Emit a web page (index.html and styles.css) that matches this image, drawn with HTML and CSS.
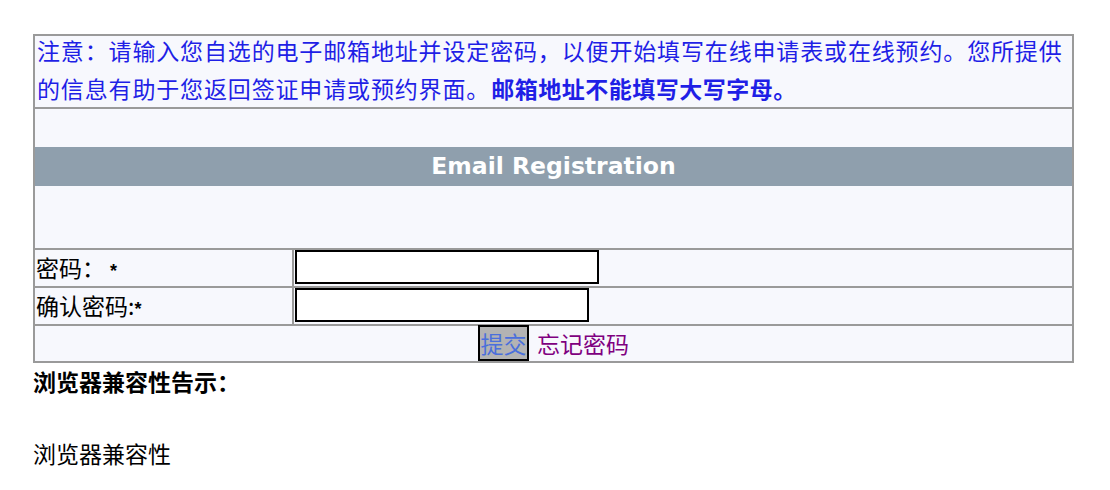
FILE: index.html
```html
<!DOCTYPE html>
<html lang="zh-CN">
<head>
<meta charset="utf-8">
<title>Email Registration</title>
<link rel="stylesheet" href="styles.css">
</head>
<body>
<div class="page">
  <div class="form-box">
    <div class="row notice"><div class="notice-text">注意：请输入您自选的电子邮箱地址并设定密码，以便开始填写在线申请表或在线预约。您所提供的信息有助于您返回签证申请或预约界面。<b>邮箱地址不能填写大写字母。</b></div></div>
    <div class="row spacer-top"></div>
    <div class="row header">Email Registration</div>
    <div class="row spacer-mid"></div>
    <div class="row field">
      <div class="label">密码：<b class="star"> *</b></div>
      <div class="value"><input type="password" class="inp inp-a"></div>
    </div>
    <div class="row field">
      <div class="label">确认密码:<b class="star">*</b></div>
      <div class="value"><input type="password" class="inp inp-b"></div>
    </div>
    <div class="row actions">
      <button type="button" class="submit">提交</button>
      <a href="#" class="forgot">忘记密码</a>
    </div>
  </div>
  <div class="compat-title">浏览器兼容性告示：</div>
  <div class="compat-text">浏览器兼容性</div>
</div>
</body>
</html>
```
FILE: styles.css
```css
html, body {
  margin: 0;
  padding: 0;
  background: #ffffff;
}
body {
  font-family: "Noto Sans CJK SC", "Liberation Sans", sans-serif;
  font-size: 23px;
  color: #000;
}
.page {
  padding: 34px 0 0 33px;
}
.form-box {
  width: 1037px;
  border: 2px solid #9a9a9a;
  background: #f7f8fd;
}
.row {
  box-sizing: border-box;
}
.notice {
  display: flow-root;
  color: #1f1fe6;
  height: 73px;
  padding: 0 2px;
  border-bottom: 2px solid #9a9a9a;
}
.notice-text {
  line-height: 38px;
  margin-top: -5px;
  letter-spacing: 0.85px;
}
.notice b {
  font-weight: bold;
  letter-spacing: 0.5px;
  margin-left: 1px;
}
.spacer-top {
  height: 38px;
}
.header {
  height: 39px;
  background: #8f9fad;
  color: #ffffff;
  font-family: "DejaVu Sans", "Liberation Sans", sans-serif;
  font-weight: bold;
  font-size: 23.5px;
  line-height: 38px;
  text-align: center;
}
.spacer-mid {
  height: 64px;
  border-bottom: 2px solid #9a9a9a;
}
.field {
  display: flex;
  height: 38px;
  border-bottom: 2px solid #9a9a9a;
}
.label {
  width: 259px;
  box-sizing: border-box;
  border-right: 2px solid #9a9a9a;
  padding-left: 1px;
  line-height: 34px;
}
.star {
  font-family: "Liberation Sans", sans-serif;
  font-size: 18px;
}
.value {
  padding: 0 0 0 1px;
  display: flex;
  align-items: flex-start;
}
.inp {
  box-sizing: border-box;
  height: 34px;
  margin: 0;
  border: 2px solid #000;
  background: #fff;
  padding: 0;
}
.inp-a { width: 304px; }
.inp-b { width: 294px; }
.actions {
  height: 35px;
  display: flex;
  justify-content: center;
  align-items: center;
  gap: 8px;
}
.submit {
  box-sizing: border-box;
  height: 36px;
  width: 51px;
  margin: -2px 0 0 0;
  padding: 0;
  border: 2px solid #000;
  background: #b3b3b3;
  color: #4a6fdc;
  font-family: "Noto Sans CJK SC", sans-serif;
  font-size: 23px;
  line-height: 30px;
}
.forgot {
  color: #800080;
  text-decoration: none;
  line-height: 35px;
}
.compat-title {
  font-weight: bold;
  margin-top: 3px;
  line-height: 30px;
}
.compat-text {
  margin-top: 42px;
  line-height: 30px;
}
```
